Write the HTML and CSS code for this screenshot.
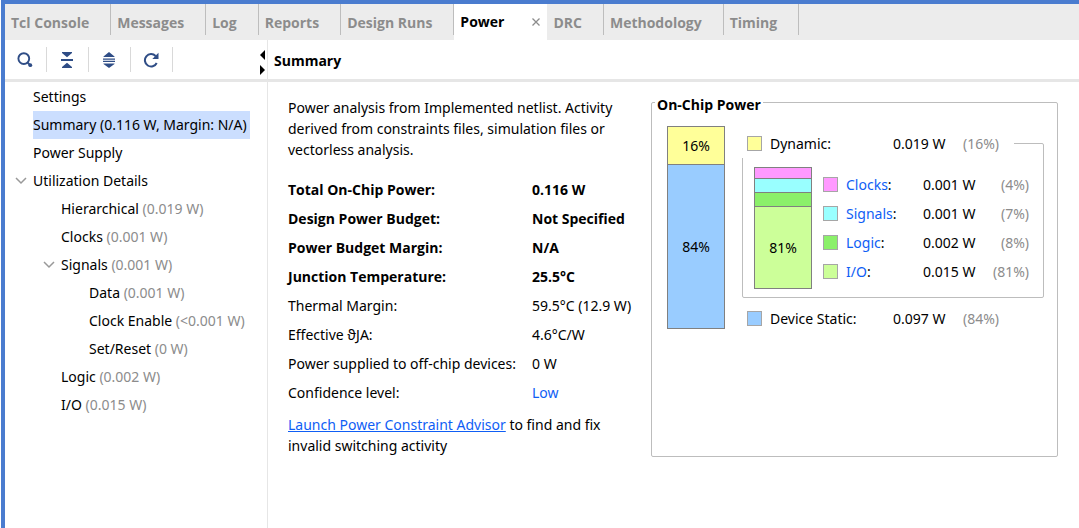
FILE: index.html
```html
<!DOCTYPE html>
<html lang="en">
<head>
<meta charset="utf-8">
<meta name="viewport" content="width=device-width, initial-scale=1">
<title>Power - Summary</title>
<link rel="stylesheet" href="styles.css">
</head>
<body>
<div class="window">
  <nav class="tabs" aria-label="Results">
    <button class="tab">Tcl Console</button>
    <button class="tab">Messages</button>
    <button class="tab">Log</button>
    <button class="tab">Reports</button>
    <button class="tab">Design Runs</button>
    <div class="tab-active">
      <button class="tab-label">Power</button>
      <button class="tab-close" aria-label="Close Power"><svg width="8" height="8" viewBox="0 0 8 8"><path d="M.5.5l7 7M7.5.5l-7 7" fill="none" stroke="#8c8c8c" stroke-width="1.3"/></svg></button>
    </div>
    <button class="tab">DRC</button>
    <button class="tab">Methodology</button>
    <button class="tab">Timing</button>
  </nav>

  <div class="body">
    <aside class="sidebar">
      <div class="toolbar">
        <button class="tool" aria-label="Search"><svg width="16" height="16" viewBox="0 0 16 16"><circle cx="6.8" cy="6.6" r="5.4" fill="none" stroke="#2f4d86" stroke-width="1.9"/><path d="M10.5 10.5l2.5 2.5" stroke="#2f4d86" stroke-width="2"/><circle cx="13.3" cy="13.2" r="1.9" fill="#2f4d86"/></svg></button>
        <button class="tool" aria-label="Collapse all"><svg width="16" height="16" viewBox="0 0 16 16" fill="#2f4d86"><path d="M3 0h10v1L8 5.200 3 1zM2 7h12v2H2zM8 10.800l5 4.200v1H3v-1z"/></svg></button>
        <button class="tool" aria-label="Expand all"><svg width="16" height="16" viewBox="0 0 16 16" fill="#2f4d86"><path d="M8 0l5.500 4.500V5h-11v-.5zM2 6.400h12v1.300H2zM2 8.800h12v1.300H2zM2.500 11.400h11v.5L8 16l-5.500-4.100z"/></svg></button>
        <button class="tool" aria-label="Refresh"><svg width="16" height="16" viewBox="0 0 16 16"><path d="M12.600 4A6.200 6.200 0 1 0 13.700 11" fill="none" stroke="#2f4d86" stroke-width="2"/><path d="M15.500.8V7H9.300z" fill="#2f4d86"/></svg></button>
        <div class="splitter">
          <button aria-label="Collapse left"><svg width="5" height="10" viewBox="0 0 5 10"><path d="M5 0v10L0 5z"/></svg></button>
          <button aria-label="Collapse right"><svg width="5" height="10" viewBox="0 0 5 10"><path d="M0 0v10l5-5z"/></svg></button>
        </div>
      </div>
      <ul class="tree">
        <li><a class="item">Settings</a></li>
        <li><a class="item selected">Summary (0.116 W, Margin: N/A)</a></li>
        <li><a class="item">Power Supply</a></li>
        <li><a class="item"><svg class="chevron" width="12" height="8" viewBox="0 0 12 8"><path d="M1 1l5 5 5-5" fill="none" stroke="#999" stroke-width="1.5"/></svg>Utilization Details</a>
          <ul>
            <li><a class="item">Hierarchical <span class="dim">(0.019 W)</span></a></li>
            <li><a class="item">Clocks <span class="dim">(0.001 W)</span></a></li>
            <li><a class="item"><svg class="chevron" width="12" height="8" viewBox="0 0 12 8"><path d="M1 1l5 5 5-5" fill="none" stroke="#999" stroke-width="1.5"/></svg>Signals <span class="dim">(0.001 W)</span></a>
              <ul>
                <li><a class="item">Data <span class="dim">(0.001 W)</span></a></li>
                <li><a class="item">Clock Enable <span class="dim">(&lt;0.001 W)</span></a></li>
                <li><a class="item">Set/Reset <span class="dim">(0 W)</span></a></li>
              </ul>
            </li>
            <li><a class="item">Logic <span class="dim">(0.002 W)</span></a></li>
            <li><a class="item">I/O <span class="dim">(0.015 W)</span></a></li>
          </ul>
        </li>
      </ul>
    </aside>

    <main class="main">
      <h1 class="title">Summary</h1>
      <div class="content">
        <section class="report">
          <p class="intro">Power analysis from Implemented netlist. Activity<br>derived from constraints files, simulation files or<br>vectorless analysis.</p>
          <table class="facts">
            <tr class="strong"><th>Total On-Chip Power:</th><td>0.116 W</td></tr>
            <tr class="strong"><th>Design Power Budget:</th><td>Not Specified</td></tr>
            <tr class="strong"><th>Power Budget Margin:</th><td>N/A</td></tr>
            <tr class="strong"><th>Junction Temperature:</th><td>25.5°C</td></tr>
            <tr><th>Thermal Margin:</th><td>59.5°C (12.9 W)</td></tr>
            <tr><th>Effective ϑJA:</th><td>4.6°C/W</td></tr>
            <tr><th>Power supplied to off-chip devices:</th><td>0 W</td></tr>
            <tr><th>Confidence level:</th><td><a class="link" href="#">Low</a></td></tr>
          </table>
          <p class="advice"><a class="link underlined" href="#">Launch Power Constraint Advisor</a> to find and fix<br>invalid switching activity</p>
        </section>

        <fieldset class="chip">
          <legend class="chip-title">On-Chip Power</legend>
          <div class="chart">
            <div class="bar total">
              <div class="seg yellow">16%</div>
              <div class="seg blue">84%</div>
            </div>
            <div class="breakdown">
              <fieldset class="dynamic">
                <legend class="row"><span class="swatch yellow"></span><span class="name">Dynamic:</span><span class="watts">0.019 W</span><span class="dim">(16%)</span></legend>
                <div class="detail">
                  <div class="bar part">
                    <div class="seg pink"></div>
                    <div class="seg cyan"></div>
                    <div class="seg green"></div>
                    <div class="seg lime">81%</div>
                  </div>
                  <table class="parts">
                    <tr><td><span class="swatch pink"></span></td><th><a class="link" href="#">Clocks</a>:</th><td>0.001 W</td><td class="dim">(4%)</td></tr>
                    <tr><td><span class="swatch cyan"></span></td><th><a class="link" href="#">Signals</a>:</th><td>0.001 W</td><td class="dim">(7%)</td></tr>
                    <tr><td><span class="swatch green"></span></td><th><a class="link" href="#">Logic</a>:</th><td>0.002 W</td><td class="dim">(8%)</td></tr>
                    <tr><td><span class="swatch lime"></span></td><th><a class="link" href="#">I/O</a>:</th><td>0.015 W</td><td class="dim">(81%)</td></tr>
                  </table>
                </div>
              </fieldset>
              <div class="row static"><span class="swatch blue"></span><span class="name">Device Static:</span><span class="watts">0.097 W</span><span class="dim">(84%)</span></div>
            </div>
          </div>
        </fieldset>
      </div>
    </main>
  </div>
</div>
</body>
</html>
```

FILE: styles.css
```css
* { box-sizing: border-box; }

body {
  margin: 0;
  background: #fff;
  color: #000;
  font: 14px/20px "Noto Sans", "Open Sans", sans-serif;
}

button {
  border: 0;
  padding: 0;
  background: none;
  color: inherit;
  font: inherit;
}

ul { list-style: none; margin: 0; padding: 0; }
svg { display: block; }
p { margin: 0; }
table { border-collapse: collapse; }
th, td { padding: 0; font-weight: 400; text-align: left; white-space: nowrap; }

.tabs, .title, .strong, .chip-title { font-family: "Open Sans", "Noto Sans", sans-serif; }

.window {
  display: flex;
  flex-direction: column;
  min-height: 100vh;
  margin-left: 1px;
  border-top: 4px solid #4a7ccf;
  border-left: 4px solid #4a7ccf;
}

.tabs { display: flex; height: 36px; background: #ececec; }

.tab {
  height: 31px;
  padding: 6px 21px 0 6px;
  border-right: 1px solid #bdbdbd;
  color: #8c8c8c;
  font-weight: 700;
  line-height: 24px;
  white-space: nowrap;
}

.tab-active {
  display: flex;
  align-items: center;
  gap: 28px;
  padding: 0 7px 0 6px;
  background: #fff;
}

.tab-label { font-weight: 700; }

.body { display: flex; flex: 1; }

.sidebar { flex: none; width: 263px; border-right: 1px solid #e6e6e6; }

.toolbar {
  display: flex;
  align-items: center;
  height: 42px;
  border-bottom: 3px solid #e6e6e6;
}

.tool {
  display: flex;
  align-items: center;
  justify-content: center;
  width: 42px;
  height: 25px;
  padding-right: 1px;
  border-right: 1px solid #d9d9d9;
}

.splitter { display: grid; gap: 5px; margin: 6px 2px 0 auto; }
.splitter button { line-height: 0; }

.tree { padding: 1px 0 0 28px; }
.tree ul { padding-left: 28px; }

.item {
  position: relative;
  display: block;
  width: max-content;
  line-height: 28px;
  white-space: nowrap;
}

.selected { padding-right: 3px; background: #cbdefe; }
.chevron { position: absolute; top: 10px; left: -18px; }
.dim { color: #8c8c8c; }

.main { flex: 1; min-width: 0; }

.title {
  height: 42px;
  margin: 0;
  padding-left: 6px;
  border-bottom: 3px solid #e6e6e6;
  font-size: 14px;
  line-height: 42px;
}

.content {
  display: flex;
  align-items: flex-start;
  gap: 18px;
  padding: 7px 21px 0 20px;
}

.report { flex: 1; min-width: 0; padding-top: 8px; white-space: nowrap; }
.intro { line-height: 21px; }
.facts { margin-top: 15px; }
.facts tr { height: 29px; }
.facts th { width: 244px; }
.facts .strong > * { font-weight: 700; }
.advice { margin-top: 7px; line-height: 21px; }

.link { color: #0f5ef5; text-decoration: none; }
.underlined { text-decoration: underline; }

fieldset {
  min-width: 0;
  margin: 0;
  padding: 0;
  border: 1px solid #bdbdbd;
  border-radius: 2px;
}

.chip { flex: none; width: 407px; min-height: 368px; padding: 11px 13px 0 15px; }

.chip-title {
  margin-left: -12px;
  padding: 6px 2px 0;
  font-weight: 700;
}

.chart { display: flex; align-items: flex-start; gap: 17px; }

.bar {
  display: flex;
  flex: none;
  flex-direction: column;
  width: 58px;
  border: 1px solid #808080;
}

.seg { display: grid; flex: 1; place-items: center; }
.seg + .seg { border-top: 1px solid #808080; }
.total { height: 203px; }
.total .yellow { flex: 0 0 37px; }
.part { height: 122px; }
.part .pink { flex: 0 0 10px; }
.part .cyan, .part .green { flex: 0 0 14px; }

.yellow { background: #ffff99; }
.blue { background: #99ccff; }
.pink { background: #ff99ff; }
.cyan { background: #99ffff; }
.green { background: #8bf06a; }
.lime { background: #ccff99; }

.breakdown { flex: 1; padding-top: 3px; }

.row { display: flex; align-items: center; height: 29px; }

.dynamic > .row {
  width: 272px;
  margin-left: -1px;
  padding-left: 5px;
  background: #fff;
}

.swatch {
  display: block;
  width: 15px;
  height: 15px;
  border: 1px solid #a6a6a6;
}

.name { width: 123px; margin-left: 8px; }
.watts { width: 70px; }

.detail {
  display: flex;
  align-items: flex-start;
  justify-content: space-between;
  padding: 9px 14px 8px 11px;
}

.parts { margin-top: 3px; }
.parts tr { height: 29px; }
.parts td:first-child { width: 23px; }
.parts th { width: 77px; }
.parts td:nth-child(3) { width: 62px; }
.parts td:last-child { width: 44px; text-align: right; }

.static { margin-top: 6px; padding-left: 5px; }
```
